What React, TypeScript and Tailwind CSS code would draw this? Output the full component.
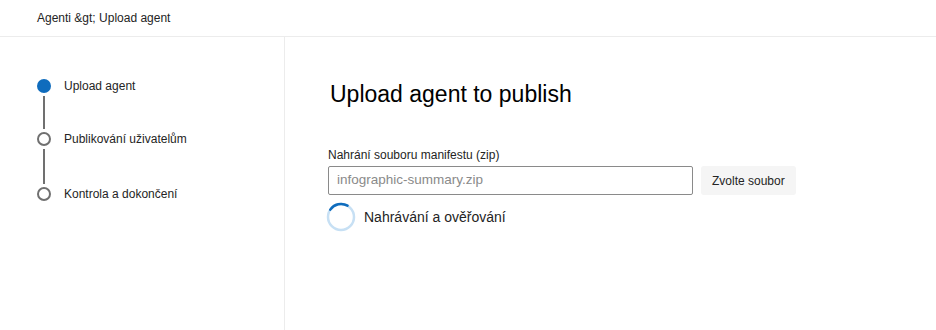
const steps = [
  { label: 'Upload agent', active: true },
  { label: 'Publikování uživatelům', active: false },
  { label: 'Kontrola a dokončení', active: false },
];

function Stepper() {
  return (
    <div className="flex flex-col pl-[37px] pt-[41px]">
      {steps.map((step, i) => (
        <div key={step.label} className="flex flex-col">
          <div className="flex items-center gap-[13px] h-[16px]">
            <span
              className={
                step.active
                  ? 'w-[14px] h-[14px] rounded-full bg-[#0f6cbd]'
                  : 'w-[14px] h-[14px] rounded-full border-2 border-[#707070] bg-white'
              }
            />
            <span className="text-[12px] text-[#242424]">{step.label}</span>
          </div>
          {i < steps.length - 1 && (
            <div className={i === 0 ? 'ml-[6px] w-[2px] h-[33px] my-[2px] bg-[#707070]' : 'ml-[6px] w-[2px] h-[35px] my-[2px] bg-[#707070]'} />
          )}
        </div>
      ))}
    </div>
  );
}

function Spinner() {
  return (
    <svg width="30" height="30" viewBox="0 0 30 30">
      <circle cx="15" cy="15" r="13" fill="none" stroke="#c7e0f4" strokeWidth="2.5" />
      <path d="M4.3 7.6 A13 13 0 0 1 21.5 3.7" fill="none" stroke="#0f6cbd" strokeWidth="2.5" strokeLinecap="round" />
    </svg>
  );
}

export default function App() {
  return (
    <div className="w-[936px] h-[330px] bg-white flex flex-col font-['Liberation_Sans',Arial,sans-serif] text-[#242424]">
      <div className="h-[37px] shrink-0 border-b border-[#ececec] flex items-center pl-[37px] text-[12px]">
        Agenti &amp;gt; Upload agent
      </div>
      <div className="flex flex-1">
        <div className="w-[285px] shrink-0 border-r border-[#ececec]">
          <Stepper />
        </div>
        <div className="flex-1 pl-[43px] pt-[42px]">
          <h1 className="text-[23px] leading-[30px] text-black ml-[2px]">Upload agent to publish</h1>
          <div className="mt-[38px] text-[12px] leading-[16px]">Nahrání souboru manifestu (zip)</div>
          <div className="flex items-center gap-[8px] mt-[3px]">
            <div className="w-[365px] h-[29px] border border-[#8a8a8a] rounded-[2px] flex items-center px-[8px] text-[13.5px] text-[#8a8a8a]">
              infographic-summary.zip
            </div>
            <button className="h-[29px] px-[11px] bg-[#f5f5f5] rounded-[3px] text-[12px] text-[#242424]">
              Zvolte soubor
            </button>
          </div>
          <div className="flex items-center gap-[8px] mt-[7px] -ml-[2px]">
            <Spinner />
            <span className="text-[14px] text-[#242424]">Nahrávání a ověřování</span>
          </div>
        </div>
      </div>
    </div>
  );
}
